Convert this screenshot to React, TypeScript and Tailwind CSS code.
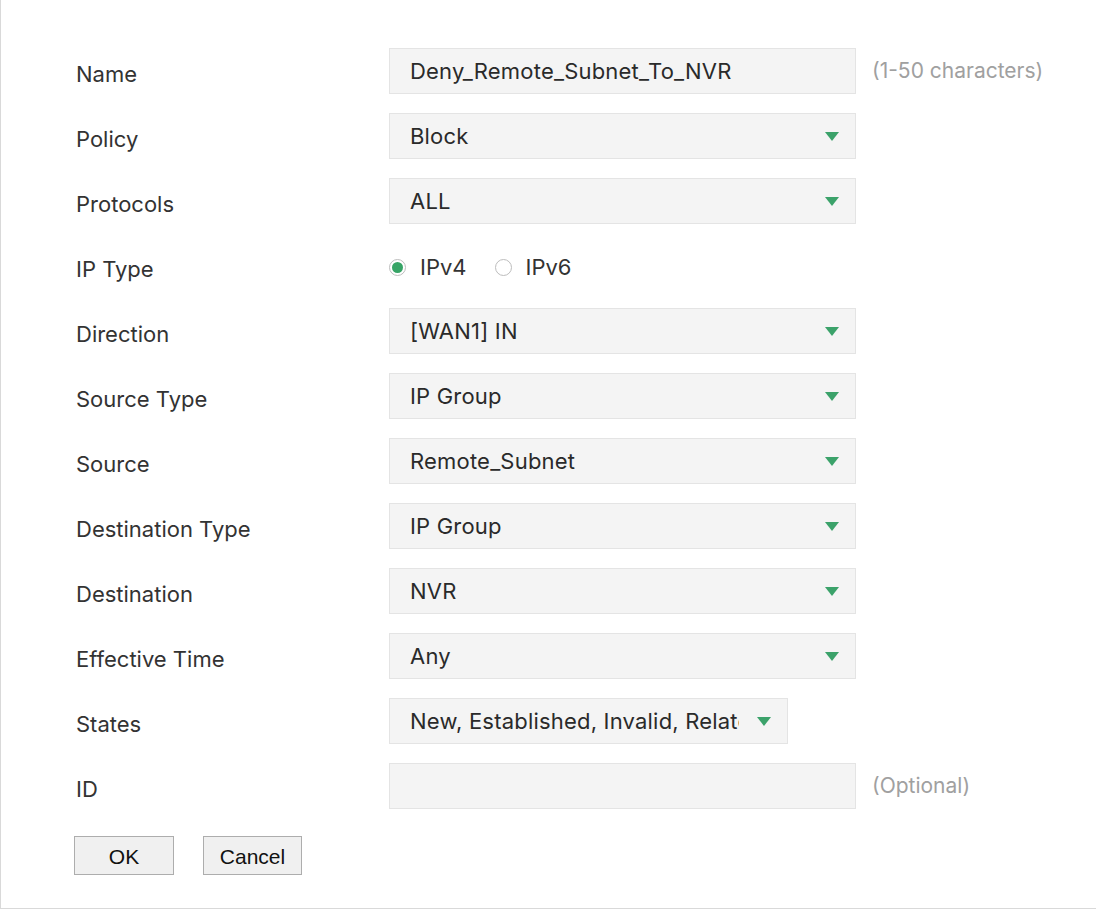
import React from 'react';

const font = { fontFamily: 'Inter, "Noto Sans", sans-serif' };

function Arrow() {
  return (
    <svg width="14" height="9" viewBox="0 0 14 9" className="shrink-0">
      <path d="M0 0 H14 L7 9 Z" fill="#3ba26a" />
    </svg>
  );
}

function Select({ value, narrow }: { value: string; narrow?: boolean }) {
  return (
    <div
      className={`flex h-[46px] items-center border border-[#e4e4e4] bg-[#f4f4f4] pl-[20px] pr-[16px] ${
        narrow ? 'w-[399px]' : 'w-[467px]'
      }`}
    >
      <span className="mr-[18px] flex-1 overflow-hidden whitespace-nowrap text-[22px] tracking-[0.2px] text-[#2a2a2a]">
        {value}
      </span>
      <Arrow />
    </div>
  );
}

function Row({ label, children }: { label: string; children: React.ReactNode }) {
  return (
    <div className="flex h-[46px] items-center">
      <div className="w-[313px] pt-[6px] text-[22px] text-[#333]">{label}</div>
      <div className="flex items-center">{children}</div>
    </div>
  );
}

function Radio({ checked, label }: { checked?: boolean; label: string }) {
  return (
    <div className="flex items-center gap-[14px]">
      <span className="flex h-[17px] w-[17px] items-center justify-center rounded-full border border-[#bdbdbd] bg-white">
        {checked && <span className="h-[11px] w-[11px] rounded-full bg-[#37a466]" />}
      </span>
      <span className="text-[22px] text-[#333]">{label}</span>
    </div>
  );
}

export default function App() {
  const selects: [string, string][] = [
    ['Direction', '[WAN1] IN'],
    ['Source Type', 'IP Group'],
    ['Source', 'Remote_Subnet'],
    ['Destination Type', 'IP Group'],
    ['Destination', 'NVR'],
    ['Effective Time', 'Any'],
  ];

  return (
    <div className="h-[915px] w-[1096px] bg-white" style={font}>
      <div className="flex h-[909px] flex-col border-b border-l border-[#d9d9d9] pl-[75px] pt-[48px]">
        <div className="flex flex-col gap-[19px]">
          <Row label="Name">
            <div className="flex h-[46px] w-[467px] items-center border border-[#e4e4e4] bg-[#f4f4f4] pl-[20px] text-[22px] tracking-[0.2px] text-[#2a2a2a]">
              Deny_Remote_Subnet_To_NVR
            </div>
            <span className="ml-[16px] text-[21px] text-[#a0a0a0]">(1-50 characters)</span>
          </Row>
          <Row label="Policy">
            <Select value="Block" />
          </Row>
          <Row label="Protocols">
            <Select value="ALL" />
          </Row>
          <Row label="IP Type">
            <div className="flex items-center gap-[28px] pt-[3px]">
              <Radio checked label="IPv4" />
              <Radio label="IPv6" />
            </div>
          </Row>
          {selects.map(([l, v]) => (
            <Row key={l} label={l}>
              <Select value={v} />
            </Row>
          ))}
          <Row label="States">
            <Select value="New, Established, Invalid, Related" narrow />
          </Row>
          <Row label="ID">
            <div className="h-[46px] w-[467px] border border-[#e4e4e4] bg-[#f4f4f4]" />
            <span className="ml-[16px] text-[21px] text-[#a0a0a0]">(Optional)</span>
          </Row>
        </div>
        <div
          className="-ml-[2px] mt-[27px] flex gap-[29px] text-[21px] text-[#111]"
          style={{ fontFamily: '"Liberation Sans", Arial, sans-serif' }}
        >
          <button className="h-[39px] w-[100px] border border-[#adadad] bg-[#f0f0f0] pt-[3px]">OK</button>
          <button className="h-[39px] w-[99px] border border-[#adadad] bg-[#f0f0f0] pt-[3px]">Cancel</button>
        </div>
      </div>
    </div>
  );
}
